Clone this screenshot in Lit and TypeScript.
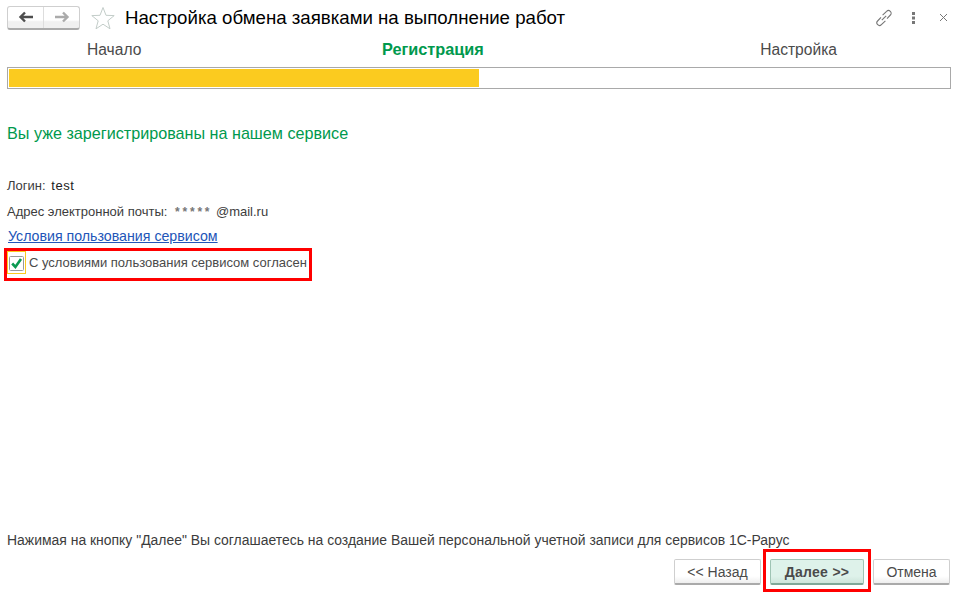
import { LitElement, html, css } from "lit";
import { customElement } from "lit/decorators.js";

@customElement("app-root")
export class AppRoot extends LitElement {
  static styles = css`
    :host { display: block; position: relative; width: 963px; height: 594px; background: #fff; overflow: hidden;
      font-family: "Liberation Sans", Arial, sans-serif; color: #333; font-size: 13px; }
    .page { display: flex; flex-direction: column; height: 594px; box-sizing: border-box; padding: 5px 12px 9px 7px; }
    .head { display: flex; align-items: center; height: 25px; flex: none; }
    .nav { display: flex; width: 73px; height: 24px; box-sizing: border-box; border: 1px solid #cfcfcf; border-bottom: 2px solid #aaa; border-radius: 3px;
      background: linear-gradient(#fff 0, #fff 62%, #f0f0f0 70%, #f0f0f0 100%); }
    .nav div { flex: 1; display: flex; align-items: center; justify-content: center; }
    .nav div + div { border-left: 1px solid #ddd; }
    .star { margin-left: 11px; width: 24px; height: 24px; display: block; }
    .title { margin-left: 10px; font-size: 18.67px; color: #000; flex: 1; white-space: nowrap; }
    .tools { display: flex; align-items: center; }
    .tools svg { display: block; }
    .link { margin-right: 18px; }
    .dots { margin-right: 22px; }
    .close { margin-right: 3px; }
    .steps { display: grid; grid-template-columns: 375px 1fr auto; font-size: 15.6px; height: 19px; margin-top: 10px; line-height: 19px; color: #4b4b4b; flex: none; }
    .steps .a { padding-left: 80px; }
    .steps .b { font-size: 16.3px; font-weight: bold; color: #00994d; }
    .steps .c { padding-right: 114px; }
    .bar { flex: none; margin-top: 8px; height: 22px; box-sizing: border-box; border: 1px solid #a9a9a9; padding: 1px; }
    .fill { width: 470px; height: 100%; background: #fbcb1f; }
    .h2 { flex: none; margin-top: 35px; font-size: 16.16px; line-height: 18px; color: #00994d; }
    .info { flex: none; display: flex; flex-direction: column; margin-top: 31px; color: #3c3c3c; }
    .row { height: 25.5px; line-height: 25px; white-space: nowrap; }
    .login b { font-weight: normal; color: #222; margin-left: 2px; letter-spacing: .6px; }
    .stars { color: #777; margin-left: 4px; font-weight: bold; letter-spacing: 2.8px; font-size: 12px; }
    a { color: #2255b8; text-decoration: underline; font-size: 14.2px; margin-left: 1px; }
    .check { display: flex; align-items: center; gap: 3px; margin-top: 3px; height: 20px; color: #4a4a4a; white-space: nowrap; }
    .box { width: 19px; height: 23px; box-sizing: border-box; border: 1px solid #fbcb1f; padding: 4px 1px 0; flex: none; }
    .box svg { display: block; }
    .grow { flex: 1; }
    .note { flex: none; font-size: 13.95px; line-height: 16px; color: #3c3c3c; margin-bottom: 11px; white-space: nowrap; }
    .foot { flex: none; display: flex; justify-content: flex-end; gap: 9px; margin-right: 1px; }
    .btn { height: 26px; box-sizing: border-box; border: 1px solid #cfcfcf; border-bottom: 2px solid #aaa; border-radius: 2px; display: flex; align-items: center; justify-content: center;
      font-size: 14px; color: #4a4a4a; background: linear-gradient(#fff 0, #fff 70%, #eee 100%); }
    .back { width: 87px; }
    .next { width: 94px; font-weight: bold; letter-spacing: .3px; border-color: #9fc4b4; border-bottom-color: #7fa898; background: linear-gradient(#def2ea 0, #def2ea 70%, #cde5db 100%); }
    .cancel { width: 77px; }
    .mark { position: absolute; box-sizing: border-box; border: 3px solid #f00; pointer-events: none; }
    .m1 { left: 4px; top: 248px; width: 308px; height: 33px; }
    .m2 { left: 763px; top: 549px; width: 108px; height: 43px; }
  `;

  render() {
    return html`
      <div class="page">
        <div class="head">
          <div class="nav">
            <div><svg width="16" height="12" viewBox="0 0 16 12"><path d="M7 1.5 2.5 6 7 10.5M3 6H15" fill="none" stroke="#4d4d4d" stroke-width="2.4"/></svg></div>
            <div><svg width="16" height="12" viewBox="0 0 16 12"><path d="M9 1.5 13.5 6 9 10.5M13 6H1" fill="none" stroke="#ababab" stroke-width="2.4"/></svg></div>
          </div>
          <svg class="star" viewBox="0 0 24 24"><path d="M12 1.5 15 9.3 23.2 9.6 16.8 14.8 19 22.8 12 18.2 5 22.8 7.2 14.8 .8 9.6 9 9.3Z" fill="#fff" stroke="#c3cdc9" stroke-width="1"/></svg>
          <div class="title">Настройка обмена заявками на выполнение работ</div>
          <div class="tools">
            <svg class="link" width="18" height="18" viewBox="0 0 18 18"><g fill="none" stroke="#777" stroke-width="1.1"><path d="M7.6 6.2 11.6 2.4a2.6 2.6 0 0 1 3.8 3.6L12 9.6"/><path d="M10.4 11.8 6.4 15.6a2.6 2.6 0 0 1-3.8-3.6L6 8.4"/><path d="M6.8 11.2 11.2 6.8"/></g></svg>
            <svg class="dots" width="6" height="14" viewBox="0 0 6 14"><g fill="#777"><rect x="1" y="1" width="3" height="3"/><rect x="1" y="5.5" width="3" height="3"/><rect x="1" y="10" width="3" height="3"/></g></svg>
            <svg class="close" width="9" height="9" viewBox="0 0 9 9"><path d="M1 1 8 8M8 1 1 8" stroke="#777" stroke-width="1"/></svg>
          </div>
        </div>
        <div class="steps">
          <div class="a">Начало</div>
          <div class="b">Регистрация</div>
          <div class="c">Настройка</div>
        </div>
        <div class="bar"><div class="fill"></div></div>
        <div class="h2">Вы уже зарегистрированы на нашем сервисе</div>
        <div class="info">
          <div class="row login">Логин: <b>test</b></div>
          <div class="row">Адрес электронной почты: <span class="stars">*****</span> @mail.ru</div>
          <div class="row"><a>Условия пользования сервисом</a></div>
          <div class="check">
            <div class="box"><svg width="15" height="15" viewBox="0 0 15 15"><rect x=".5" y=".5" width="14" height="14" rx="1" fill="#fff" stroke="#9a9a9a"/><path d="M3.2 7.5 6.4 11 12 3" fill="none" stroke="#0b9a52" stroke-width="2.6"/></svg></div>
            <span>С условиями пользования сервисом согласен</span>
          </div>
        </div>
        <div class="grow"></div>
        <div class="note">Нажимая на кнопку "Далее" Вы соглашаетесь на создание Вашей персональной учетной записи для сервисов 1С-Рарус</div>
        <div class="foot">
          <div class="btn back">&lt;&lt; Назад</div>
          <div class="btn next">Далее &gt;&gt;</div>
          <div class="btn cancel">Отмена</div>
        </div>
      </div>
      <div class="mark m1"></div>
      <div class="mark m2"></div>
    `;
  }
}
